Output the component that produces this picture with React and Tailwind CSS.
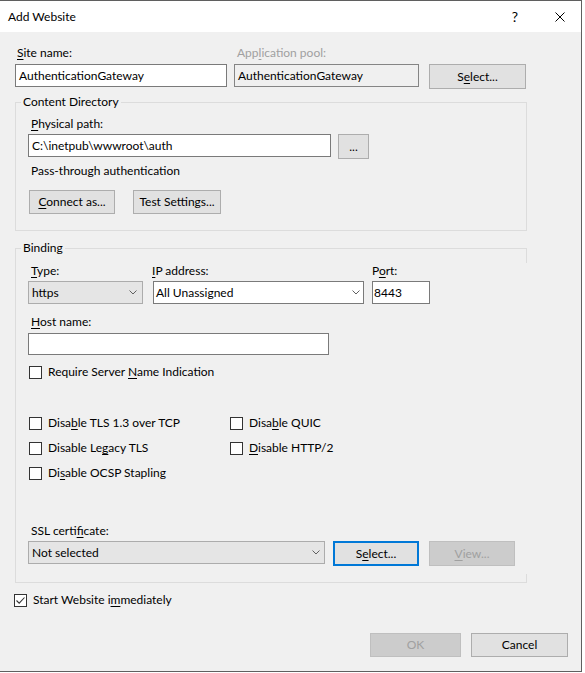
import React from "react";

function U({ children }) {
  return <span className="underline decoration-1 underline-offset-[2px]">{children}</span>;
}

function Chevron() {
  return (
    <svg width="8" height="5" viewBox="0 0 8 5" className="shrink-0">
      <path d="M0.5 0.5 L4 4 L7.5 0.5" fill="none" stroke="#606060" strokeWidth="1" />
    </svg>
  );
}

function Box({ checked }) {
  return (
    <span className="w-[13px] h-[13px] border border-[#333333] bg-white flex items-center justify-center shrink-0">
      {checked && (
        <svg width="11" height="11" viewBox="0 0 11 11">
          <path d="M1.5 5.5 L4.2 8.2 L9.5 2.5" fill="none" stroke="#333333" strokeWidth="1.1" />
        </svg>
      )}
    </span>
  );
}

function Check({ children, checked, className = "" }) {
  return (
    <div className={"h-[16px] flex items-center gap-[6px] " + className}>
      <Box checked={checked} />
      <span className="leading-[16px]">{children}</span>
    </div>
  );
}

export default function App() {
  return (
    <div className="w-[585px] h-[673px] bg-white font-['Lato',sans-serif] text-[12px] leading-[16px] text-black">
      <div className="w-[582px] h-[672px] border-t border-r border-b border-[#5f5f5f] bg-[#f0f0f0] flex flex-col">
        {/* Title bar */}
        <div className="h-[31px] bg-white flex items-center pl-[8px] shrink-0">
          <span>Add Website</span>
          <div className="ml-auto mr-[16px] flex items-center gap-[37px]">
            <span className="text-[14px] leading-[16px]">?</span>
            <svg width="10" height="10" viewBox="0 0 10 10">
              <path d="M0.5 0.5 L9.5 9.5 M9.5 0.5 L0.5 9.5" stroke="#000" strokeWidth="1" />
            </svg>
          </div>
        </div>

        {/* Body */}
        <div className="pl-[15px] flex flex-col">
          {/* Row 1 */}
          <div className="mt-[13px] flex items-start">
            <div className="w-[212px] flex flex-col">
              <span className="h-[16px] pl-[2px]"><U>S</U>ite name:</span>
              <div className="mt-[3px] h-[23px] border border-[#7a7a7a] bg-white pl-[3px] flex items-center">AuthenticationGateway</div>
            </div>
            <div className="ml-[7px] w-[185px] flex flex-col">
              <span className="h-[16px] pl-[3px] text-[#a0a0a0]">App<U>l</U>ication pool:</span>
              <div className="mt-[3px] h-[23px] border border-[#858585] bg-[#f0f0f0] pl-[3px] flex items-center">AuthenticationGateway</div>
            </div>
            <div className="ml-[10px] mt-[19px] w-[97px] h-[25px] bg-[#e1e1e1] border border-[#adadad] flex items-center justify-center">
              <span>S<U>e</U>lect...</span>
            </div>
          </div>

          {/* Content Directory */}
          <fieldset className="mt-[5px] w-[512px] border border-[#dcdcdc]">
            <legend className="ml-[5px] px-[2px] h-[16px] leading-[16px]">Content Directory</legend>
            <div className="pl-[12px] pb-[16px] flex flex-col">
              <span className="mt-[6px] h-[16px] pl-[3px]"><U>P</U>hysical path:</span>
              <div className="mt-[2px] flex items-start">
                <div className="w-[303px] h-[23px] border border-[#7a7a7a] bg-white pl-[3px] flex items-center">C:\inetpub\wwwroot\auth</div>
                <div className="ml-[7px] w-[31px] h-[25px] bg-[#e1e1e1] border border-[#adadad] flex items-center justify-center">...</div>
              </div>
              <span className="mt-[4px] h-[16px] pl-[3px]">Pass-through authentication</span>
              <div className="mt-[11px] flex">
                <div className="ml-[1px] w-[86px] h-[24px] bg-[#e1e1e1] border border-[#adadad] flex items-center justify-center">
                  <span><U>C</U>onnect as...</span>
                </div>
                <div className="ml-[18px] w-[88px] h-[24px] bg-[#e1e1e1] border border-[#adadad] flex items-center justify-center">
                  <span>Test Settings...</span>
                </div>
              </div>
            </div>
          </fieldset>

          {/* Binding */}
          <fieldset className="mt-[9px] w-[512px] border border-[#dcdcdc] border-r-transparent">
            <legend className="ml-[5px] px-[2px] h-[16px] leading-[16px]">Binding</legend>
            <div className="relative pl-[12px] pb-[16px] flex flex-col">
              <div className="absolute right-[-1px] top-[-8px] w-px h-[15px] bg-[#dcdcdc]"></div>
              <div className="absolute right-[-1px] bottom-[-1px] w-px h-[9px] bg-[#dcdcdc]"></div>
              <div className="mt-[7px] flex items-start">
                <div className="w-[115px] flex flex-col">
                  <span className="h-[16px] pl-[3px]"><U>T</U>ype:</span>
                  <div className="mt-[2px] h-[23px] bg-[#e5e5e5] border border-[#acacac] pl-[3px] pr-[5px] flex items-center justify-between">
                    <span>https</span>
                    <Chevron />
                  </div>
                </div>
                <div className="ml-[10px] w-[211px] flex flex-col">
                  <span className="h-[16px] ml-[-1px]"><U>I</U>P address:</span>
                  <div className="mt-[2px] h-[23px] bg-white border border-[#7a7a7a] pl-[2px] pr-[3px] flex items-center justify-between">
                    <span>All Unassigned</span>
                    <Chevron />
                  </div>
                </div>
                <div className="ml-[8px] w-[58px] flex flex-col">
                  <span className="h-[16px]">P<U>o</U>rt:</span>
                  <div className="mt-[2px] h-[23px] bg-white border border-[#7a7a7a] pl-[1px] flex items-center">8443</div>
                </div>
              </div>

              <span className="mt-[10px] h-[16px] pl-[3px]"><U>H</U>ost name:</span>
              <div className="mt-[3px] w-[301px] h-[22px] bg-white border border-[#7a7a7a]"></div>

              <Check className="mt-[9px] ml-[1px]">Require Server <U>N</U>ame Indication</Check>

              <div className="mt-[35px] grid grid-cols-[201px_auto] gap-y-[9px] ml-[1px]">
                <Check>Disa<U>b</U>le TLS 1.3 over TCP</Check>
                <Check>Disa<U>b</U>le QUIC</Check>
                <Check>Disable Le<U>g</U>acy TLS</Check>
                <Check><U>D</U>isable HTTP/2</Check>
                <Check>Di<U>s</U>able OCSP Stapling</Check>
              </div>

              <span className="mt-[42px] h-[16px] pl-[3px]">SSL certi<U>f</U>icate:</span>
              <div className="mt-[2px] flex items-start">
                <div className="w-[297px] h-[23px] bg-[#e5e5e5] border border-[#acacac] pl-[3px] pr-[4px] flex items-center justify-between">
                  <span>Not selected</span>
                  <Chevron />
                </div>
                <div className="ml-[8px] w-[86px] h-[25px] bg-[#e1e1e1] border-2 border-[#0078d7] flex items-center justify-center">
                  <span>S<U>e</U>lect...</span>
                </div>
                <div className="ml-[10px] w-[86px] h-[25px] bg-[#cccccc] border border-[#bfbfbf] text-[#a0a0a0] flex items-center justify-center">
                  <span><U>V</U>iew...</span>
                </div>
              </div>
            </div>
          </fieldset>

          <Check checked className="mt-[9px] ml-[-1px]">Start Website i<U>m</U>mediately</Check>

          <div className="mt-[25px] mr-[13px] flex justify-end gap-[10px]">
            <div className="w-[91px] h-[24px] bg-[#cccccc] border border-[#bfbfbf] text-[#a0a0a0] flex items-center justify-center">OK</div>
            <div className="w-[97px] h-[24px] bg-[#e1e1e1] border border-[#adadad] flex items-center justify-center">Cancel</div>
          </div>
        </div>
      </div>
    </div>
  );
}
